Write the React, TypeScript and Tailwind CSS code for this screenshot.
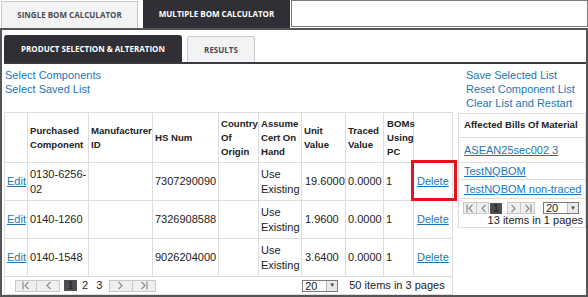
import React from 'react';

const linkCls = 'text-[#1c76bb]';
const cellCls = 'border border-[#dddddd] pl-[2px] pr-[1px] align-middle';

interface Row {
  part: string;
  hs: string;
  unit: string;
  traced: string;
  boms: string;
  marked?: boolean;
}

const rows: Row[] = [
  { part: '0130-6256-02', hs: '7307290090', unit: '19.6000', traced: '0.0000', boms: '1', marked: true },
  { part: '0140-1260', hs: '7326908588', unit: '1.9600', traced: '0.0000', boms: '1' },
  { part: '0140-1548', hs: '9026204000', unit: '3.6400', traced: '0.0000', boms: '1' },
];

const bomLinks = ['TestNQBOM', 'TestNQBOM non-traced'];

// pager arrow glyph: chevron with optional end bar
function Arrow({ dir, bar }: { dir: 'left' | 'right'; bar?: boolean }) {
  const left = dir === 'left';
  return (
    <svg width="10" height="9" viewBox="0 0 10 9" fill="none" stroke="#8a8a8a" strokeWidth="1.2">
      {bar && <line x1={left ? 2 : 8} y1="0.5" x2={left ? 2 : 8} y2="8.5" />}
      {left ? <polyline points="7.5,0.8 4,4.5 7.5,8.2" /> : <polyline points="2.5,0.8 6,4.5 2.5,8.2" />}
    </svg>
  );
}

function PagerButton({ dir, bar, width }: { dir: 'left' | 'right'; bar?: boolean; width: string }) {
  return (
    <div className={`${width} h-[12px] border border-[#c8c8c8] bg-[#efefef] flex items-center justify-center -ml-[1px] first:ml-0`}>
      <Arrow dir={dir} bar={bar} />
    </div>
  );
}

function PageSize({ width }: { width: string }) {
  return (
    <div className={`${width} h-[12px] border border-[#7a7a7a] bg-white flex items-center`}>
      <span className="flex-1 pl-[2px] text-[11px] leading-[10px] text-[#222]">20</span>
      <span className="w-[11px] h-full bg-[#e9e9e9] border-l border-[#bdbdbd] flex items-center justify-center text-[6px] text-[#444]">▼</span>
    </div>
  );
}

export default function App() {
  return (
    <div className="w-[588px] h-[297px] bg-white overflow-hidden text-[#222]" style={{ fontFamily: '"Liberation Sans", Arial, sans-serif' }}>
      {/* top level tabs */}
      <div className="flex h-[28px] items-start" style={{ fontFamily: '"Open Sans", sans-serif' }}>
        <div className="ml-[1px] mt-[1px] w-[137px] h-[27px] bg-[#f2f3f5] border border-b-0 border-[#c9c9cc] flex items-center justify-center text-[8px] font-bold text-[#4d4d55]">
          SINGLE BOM CALCULATOR
        </div>
        <div className="ml-[5px] w-[147px] h-[28px] bg-[#2f2f35] flex items-center justify-center text-[8px] font-bold text-white">
          MULTIPLE BOM CALCULATOR
        </div>
        <div className="ml-[1px] flex-1 h-[27px] border border-[#7a7a7a]" />
      </div>

      <div className="h-[269px] border-2 border-[#555558] flex flex-col">
        {/* sub tabs */}
        <div className="mt-[5px] ml-[2px] flex items-end border-b-2 border-[#3a3a40]" style={{ fontFamily: '"Open Sans", sans-serif' }}>
          <div className="w-[178px] h-[27px] bg-[#2f2f35] rounded-t-[3px] flex items-center justify-center text-[8px] font-bold text-white">
            PRODUCT SELECTION &amp; ALTERATION
          </div>
          <div className="ml-[5px] w-[68px] h-[26px] bg-[#f2f3f5] border border-b-0 border-[#c9c9cc] rounded-t-[3px] flex items-center justify-center text-[8px] font-bold text-[#4d4d55]">
            RESULTS
          </div>
        </div>

        {/* action links */}
        <div className="h-[48px] flex text-[11px] leading-[14px]">
          <div className={`pl-[3px] pt-[4px] flex flex-col ${linkCls}`}>
            <span>Select Components</span>
            <span>Select Saved List</span>
          </div>
          <div className={`ml-auto w-[120px] pt-[4px] flex flex-col ${linkCls}`}>
            <span>Save Selected List</span>
            <span>Reset Component List</span>
            <span>Clear List and Restart</span>
          </div>
        </div>

        <div className="flex items-start">
          {/* component table */}
          <table className="ml-[2px] w-[448px] table-fixed border-collapse text-[11px] leading-[15px]">
            <colgroup>
              <col className="w-[23px]" />
              <col className="w-[61px]" />
              <col className="w-[64px]" />
              <col className="w-[66px]" />
              <col className="w-[40px]" />
              <col className="w-[43px]" />
              <col className="w-[44px]" />
              <col className="w-[38px]" />
              <col className="w-[30px]" />
              <col className="w-[39px]" />
            </colgroup>
            <thead>
              <tr className="h-[50px] text-left text-[9.6px] leading-[14px] font-bold">
                <th className={cellCls}></th>
                <th className={cellCls}>Purchased Component</th>
                <th className={`${cellCls} pl-[1px]`}>Manufacturer ID</th>
                <th className={cellCls}>HS Num</th>
                <th className={cellCls}>Country Of Origin</th>
                <th className={cellCls}>Assume Cert On Hand</th>
                <th className={cellCls}>Unit Value</th>
                <th className={cellCls}>Traced Value</th>
                <th className={`${cellCls} pl-[3px]`}>BOMs Using PC</th>
                <th className={cellCls}></th>
              </tr>
            </thead>
            <tbody>
              {rows.map((r) => (
                <tr key={r.part} className="h-[38px]">
                  <td className={`${cellCls} pl-[1px]`}>
                    <span className={`${linkCls} underline`}>Edit</span>
                  </td>
                  <td className={cellCls}>{r.part}</td>
                  <td className={cellCls}></td>
                  <td className={cellCls}>{r.hs}</td>
                  <td className={cellCls}></td>
                  <td className={cellCls}>Use Existing</td>
                  <td className={`${cellCls} pl-[3px]`}>{r.unit}</td>
                  <td className={cellCls}>{r.traced}</td>
                  <td className={cellCls}>{r.boms}</td>
                  <td className={`${cellCls} pl-[3px] relative`}>
                    <span className={`${linkCls} underline`}>Delete</span>
                    {r.marked && (
                      <div className="absolute left-[-3px] right-[-5px] top-[-3px] bottom-[-1px] border-[3px] border-[#e3141b] pointer-events-none" />
                    )}
                  </td>
                </tr>
              ))}
              <tr className="h-[18px]">
                <td colSpan={10} className="border border-[#dddddd] p-0">
                  <div className="flex items-center pl-[10px]">
                    <PagerButton dir="left" bar width="w-[22px]" />
                    <PagerButton dir="left" width="w-[24px]" />
                    <div className="ml-[4px] w-[13px] h-[11px] bg-[#4e4e52] flex items-center justify-center text-[10px] text-[#2a2a2d] font-bold">1</div>
                    <span className="ml-[5px]">2</span>
                    <span className="ml-[8px]">3</span>
                    <div className="ml-[7px] flex">
                      <PagerButton dir="right" width="w-[24px]" />
                      <PagerButton dir="right" bar width="w-[24px]" />
                    </div>
                    <div className="ml-[146px]">
                      <PageSize width="w-[36px]" />
                    </div>
                    <span className="ml-[11px]">50 items in 3 pages</span>
                  </div>
                </td>
              </tr>
            </tbody>
          </table>

          {/* affected BOM panel */}
          <div className="ml-[5px] mt-[1px] w-[129px] border border-[#dddddd] text-[11px]">
            <div className="h-[24px] pl-[5px] flex items-center border-b border-[#dddddd] text-[9.6px] font-bold">
              Affected Bills Of Material
            </div>
            <div className="h-[25px] pl-[5px] flex items-center border-b border-[#dddddd]">
              <span className={`${linkCls} underline`}>ASEAN25sec002 3</span>
            </div>
            {bomLinks.map((name, i) => (
              <div key={name} className={`${i === 0 ? 'h-[17px]' : 'h-[19px]'} pl-[5px] flex items-center border-b border-[#dddddd]`}>
                <span className={`${linkCls} underline`}>{name}</span>
              </div>
            ))}
            <div className="mt-[3px] pl-[4px] flex items-center">
              <PagerButton dir="left" bar width="w-[14px]" />
              <PagerButton dir="left" width="w-[13px]" />
              <div className="ml-[1px] w-[12px] h-[11px] bg-[#4e4e52] flex items-center justify-center text-[10px] text-[#2a2a2d] font-bold">1</div>
              <div className="ml-[5px] flex">
                <PagerButton dir="right" width="w-[14px]" />
                <PagerButton dir="right" bar width="w-[15px]" />
              </div>
              <div className="ml-[8px]">
                <PageSize width="w-[36px]" />
              </div>
            </div>
            <div className="pr-[2px] pb-[1px] text-right leading-[12px]">13 items in 1 pages</div>
          </div>
        </div>
      </div>
    </div>
  );
}
